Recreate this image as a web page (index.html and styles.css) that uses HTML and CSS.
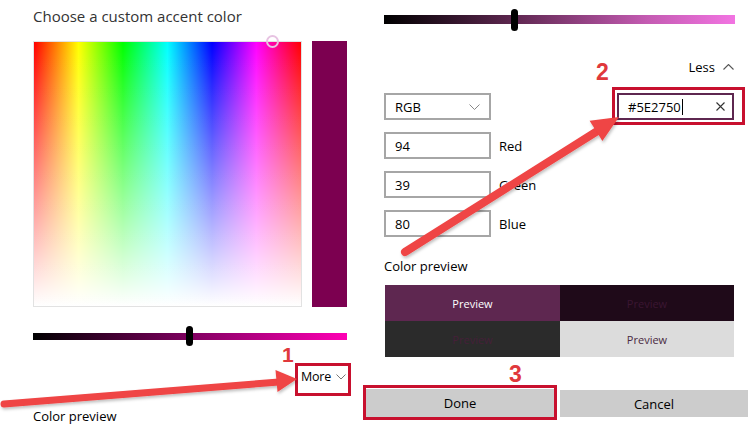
FILE: index.html
```html
<!DOCTYPE html>
<html lang="en">
<head>
<meta charset="utf-8">
<title>Choose a custom accent color</title>
<link rel="stylesheet" href="styles.css">
</head>
<body>
<div class="page">
  <section class="left">
    <h1 class="title">Choose a custom accent color</h1>
    <div class="picker">
      <div class="spectrum"><span class="spectrum-handle"></span></div>
      <div class="swatch"></div>
    </div>
    <div class="slider slider-left"><span class="thumb"></span></div>
    <div class="more-row">
      <span class="toggle">More
        <svg class="chev" width="10" height="6" viewBox="0 0 10 6"><polyline points="0.5,0.5 5,5 9.5,0.5" fill="none" stroke="#777" stroke-width="1"/></svg>
      </span>
    </div>
    <div class="label">Color preview</div>
  </section>

  <section class="right">
    <div class="slider slider-right"><span class="thumb"></span></div>
    <div class="less-row">
      <span class="toggle">Less
        <svg class="chev" width="11" height="6" viewBox="0 0 11 6"><polyline points="0.5,5.5 5.5,0.5 10.5,5.5" fill="none" stroke="#555" stroke-width="1.1"/></svg>
      </span>
    </div>
    <div class="mode-row">
      <div class="field select">RGB
        <svg class="chev" width="11" height="6" viewBox="0 0 11 6"><polyline points="0.5,0.5 5.5,5.5 10.5,0.5" fill="none" stroke="#888" stroke-width="1"/></svg>
      </div>
      <div class="field hex"><span class="hex-text">#5E2750</span><span class="caret"></span>
        <svg class="clear" width="9" height="9" viewBox="0 0 9 9"><path d="M0.5 0.5 L8.5 8.5 M8.5 0.5 L0.5 8.5" stroke="#333" stroke-width="1.1"/></svg>
      </div>
    </div>
    <div class="channel"><div class="field">94</div><span class="channel-name">Red</span></div>
    <div class="channel"><div class="field">39</div><span class="channel-name">Green</span></div>
    <div class="channel"><div class="field">80</div><span class="channel-name">Blue</span></div>
    <div class="label label-right">Color preview</div>
    <div class="preview-grid">
      <div class="cell cell-accent">Preview</div>
      <div class="cell cell-dark-accent">Preview</div>
      <div class="cell cell-dark">Preview</div>
      <div class="cell cell-light">Preview</div>
    </div>
    <div class="footer">
      <button class="btn btn-done">Done</button>
      <button class="btn btn-cancel">Cancel</button>
    </div>
  </section>

  <svg class="annotations" width="750" height="425" viewBox="0 0 750 425">
    <defs>
      <filter id="sh" x="-10%" y="-10%" width="120%" height="130%">
        <feDropShadow dx="1" dy="2" stdDeviation="1.5" flood-color="#000" flood-opacity="0.25"/>
      </filter>
    </defs>
    <g fill="none" stroke="#c8102e" stroke-width="3">
      <rect x="296.5" y="364.5" width="53" height="30"/>
      <rect x="613.5" y="88.5" width="130" height="35"/>
      <rect x="364.5" y="386.5" width="191" height="32"/>
    </g>
    <g filter="url(#sh)">
      <line x1="4" y1="404" x2="279" y2="382" stroke="#ef4444" stroke-width="7" stroke-linecap="round"/>
      <polygon points="297,379 277.5,392 275.5,370" fill="#ef4444"/>
      <line x1="405" y1="252" x2="599" y2="130" stroke="#ef4444" stroke-width="8" stroke-linecap="round"/>
      <polygon points="619,117 602.4,141.1 589.6,120.7" fill="#ef4444"/>
    </g>
    <g class="num" fill="#e0383c">
      <text x="282" y="362" font-size="21">1</text>
      <text x="596" y="80" font-size="23">2</text>
      <text x="509" y="382" font-size="23">3</text>
    </g>
  </svg>
</div>
</body>
</html>
```

FILE: styles.css
```css
* { box-sizing: border-box; }
html, body { margin: 0; padding: 0; }
body {
  width: 750px;
  height: 425px;
  overflow: hidden;
  background: #fff;
  font-family: "Open Sans", "Noto Sans", sans-serif;
  font-size: 13px;
  color: #000;
}
.page {
  position: relative;
  display: flex;
  width: 750px;
  height: 425px;
  padding-left: 33px;
}

/* left column */
.left {
  width: 314px;
  flex: none;
  display: flex;
  flex-direction: column;
}
.title {
  margin: 6px 0 0;
  font-size: 15px;
  font-weight: 400;
  line-height: 20px;
  color: #333;
  white-space: nowrap;
}
.picker {
  margin-top: 15px;
  display: flex;
  gap: 10px;
  height: 269px;
}
.spectrum {
  position: relative;
  width: 269px;
  border: 1px solid #e2e2e2;
  background:
    linear-gradient(to bottom, rgba(255,255,255,0) 0%, rgba(255,255,255,0.55) 55%, #fff 100%),
    linear-gradient(to right, #f00 0%, #ff0 16.7%, #0f0 33.3%, #0ff 50%, #00f 66.7%, #f0f 83.3%, #f00 100%);
}
.spectrum-handle {
  position: absolute;
  left: 232px;
  top: -7px;
  width: 13px;
  height: 13px;
  border-radius: 50%;
  border: 2px solid #e7c3e2;
}
.swatch {
  width: 35px;
  background: #7c0050;
}
.slider {
  position: relative;
  flex: none;
}
.slider-left {
  margin-top: 26px;
  height: 7px;
  background: linear-gradient(to right, #000 0%, #800060 50%, #ff00b4 100%);
}
.thumb {
  position: absolute;
  width: 7px;
  border-radius: 4px;
  background: #000;
}
.slider-left .thumb {
  left: 153px;
  top: -7px;
  height: 20px;
}
.more-row {
  display: flex;
  justify-content: flex-end;
  margin-top: 23px;
  margin-right: -1px;
  height: 27px;
}
.toggle {
  display: flex;
  align-items: center;
  gap: 8px;
  color: #000;
  font-size: 13px;
  line-height: 20px;
  white-space: nowrap;
}
.chev { flex: none; display: block; }
.more-row .toggle {
  width: 50px;
  padding-left: 3px;
  gap: 5px;
  font-size: 12.5px;
  letter-spacing: -0.2px;
}
.label {
  font-size: 13px;
  line-height: 18px;
  color: #000;
  white-space: nowrap;
}
.left .label {
  margin-top: 17px;
}

/* right column */
.right {
  margin-left: 37px;
  width: 351px;
  flex: none;
  display: flex;
  flex-direction: column;
}
.slider-right {
  margin-top: 15px;
  height: 9px;
  background: linear-gradient(to right, #000 0%, #5e2750 37%, #c45bb2 75%, #f274e2 100%);
}
.slider-right .thumb {
  left: 127px;
  top: -6px;
  height: 22px;
}
.less-row {
  margin-top: 33px;
  height: 20px;
  display: flex;
  justify-content: flex-end;
  margin-right: 1px;
}
.mode-row {
  margin-top: 16px;
  display: flex;
  justify-content: space-between;
  height: 27px;
}
.field {
  width: 107px;
  height: 27px;
  border: 2px solid #a6a6a6;
  padding-left: 9px;
  display: flex;
  align-items: center;
  font-size: 13px;
  color: #000;
}
.select {
  justify-content: space-between;
  padding-right: 9px;
}
.hex {
  width: 117px;
  margin-right: 1px;
  border-color: #5e2750;
}
.caret {
  width: 1px;
  height: 16px;
  background: #000;
  margin-left: 1px;
}
.clear {
  flex: none;
  margin-left: auto;
  margin-right: 7px;
}
.channel {
  margin-top: 12px;
  height: 27px;
  display: flex;
  align-items: center;
  gap: 8px;
}
.channel-name {
  font-size: 13px;
}
.label-right {
  margin-top: 20px;
}
.preview-grid {
  margin-top: 10px;
  margin-left: 1px;
  display: grid;
  grid-template-columns: 175px 174px;
  grid-template-rows: 36px 36px;
}
.cell {
  display: flex;
  align-items: center;
  justify-content: center;
  font-size: 11px;
}
.cell-accent { background: #5e2750; color: #fff; }
.cell-dark-accent { background: #1f0a19; color: #3b1632; }
.cell-dark { background: #2b2b2b; color: #452039; }
.cell-light { background: #dcdcdc; color: #4a2a42; }
.footer {
  margin-top: 32px;
  margin-left: -19px;
  display: flex;
  gap: 5px;
  width: 383px;
}
.btn {
  height: 28px;
  border: 0;
  background: #cccccc;
  font-family: "Open Sans", "Noto Sans", sans-serif;
  font-size: 13px;
  color: #000;
  padding: 0;
}
.btn-done { width: 190px; }
.btn-cancel { width: 188px; margin-top: 1px; height: 27px; }

/* annotations overlay */
.annotations {
  position: absolute;
  left: 0;
  top: 0;
  pointer-events: none;
}
.num text {
  font-family: "Liberation Sans", Arial, sans-serif;
  font-weight: 700;
}
```
